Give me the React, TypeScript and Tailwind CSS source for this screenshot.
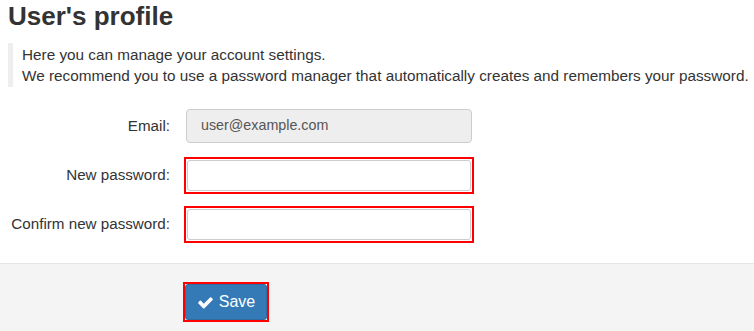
import type { ReactNode } from 'react';

function CheckIcon() {
  return (
    <svg viewBox="0 0 1792 1792" className="w-[17px] h-[17px] fill-white" aria-hidden="true">
      <path d="M1671 566q0 40-28 68l-724 724-136 136q-28 28-68 28t-68-28l-136-136-362-362q-28-28-28-68t28-68l136-136q28-28 68-28t68 28l294 295 656-657q28-28 68-28t68 28l136 136q28 28 28 68z" />
    </svg>
  );
}

function Row({ label, children }: { label: string; children: ReactNode }) {
  return (
    <div className="flex items-center">
      <label className="w-[162px] shrink-0 text-right text-[15.2px]">{label}</label>
      <div className="ml-[14px]">{children}</div>
    </div>
  );
}

function PasswordInput() {
  // red frame round the field, as in the reference
  return (
    <div className="border-2 border-[#ff0000] w-[290px] h-[37px] p-px">
      <input
        type="password"
        className="block w-full h-full bg-white border border-[#ccc] rounded-[3px] outline-none"
      />
    </div>
  );
}

export default function App() {
  return (
    <div className="w-[754px] h-[331px] bg-white text-[#333] overflow-hidden" style={{ fontFamily: '"Liberation Sans", Arial, sans-serif' }}>
      <div className="px-[8px]">
        <h3 className="text-[26px] font-bold leading-[28px] pt-[2px]">User's profile</h3>

        <blockquote className="mt-[13px] border-l-[5px] border-[#eee] pl-[9px] py-px text-[15.3px] leading-[21px] whitespace-nowrap">
          <p>Here you can manage your account settings.</p>
          <p>We recommend you to use a password manager that automatically creates and remembers your password.</p>
        </blockquote>

        <div className="mt-[22px] flex flex-col">
          <Row label="Email:">
            <div className="ml-[2px] w-[286px] h-[34px] bg-[#eee] border border-[#ccc] rounded-[4px] px-[14px] flex items-center text-[14.3px] text-[#555]">
              user@example.com
            </div>
          </Row>
          <div className="mt-[14px]">
            <Row label="New password:">
              <PasswordInput />
            </Row>
          </div>
          <div className="mt-[12px]">
            <Row label="Confirm new password:">
              <PasswordInput />
            </Row>
          </div>
        </div>
      </div>

      <div className="mt-[20px] border-t border-[#e5e5e5] bg-[#f4f4f4] h-[100px] pt-[18px] pl-[183px]">
        <div className="inline-block border-2 border-[#ff0000]">
          <button className="flex items-center gap-[5px] h-[36px] w-[82px] justify-center bg-[#337ab7] border border-[#2e6da4] rounded-[3px] text-white text-[16px]">
            <CheckIcon />
            Save
          </button>
        </div>
      </div>
    </div>
  );
}
